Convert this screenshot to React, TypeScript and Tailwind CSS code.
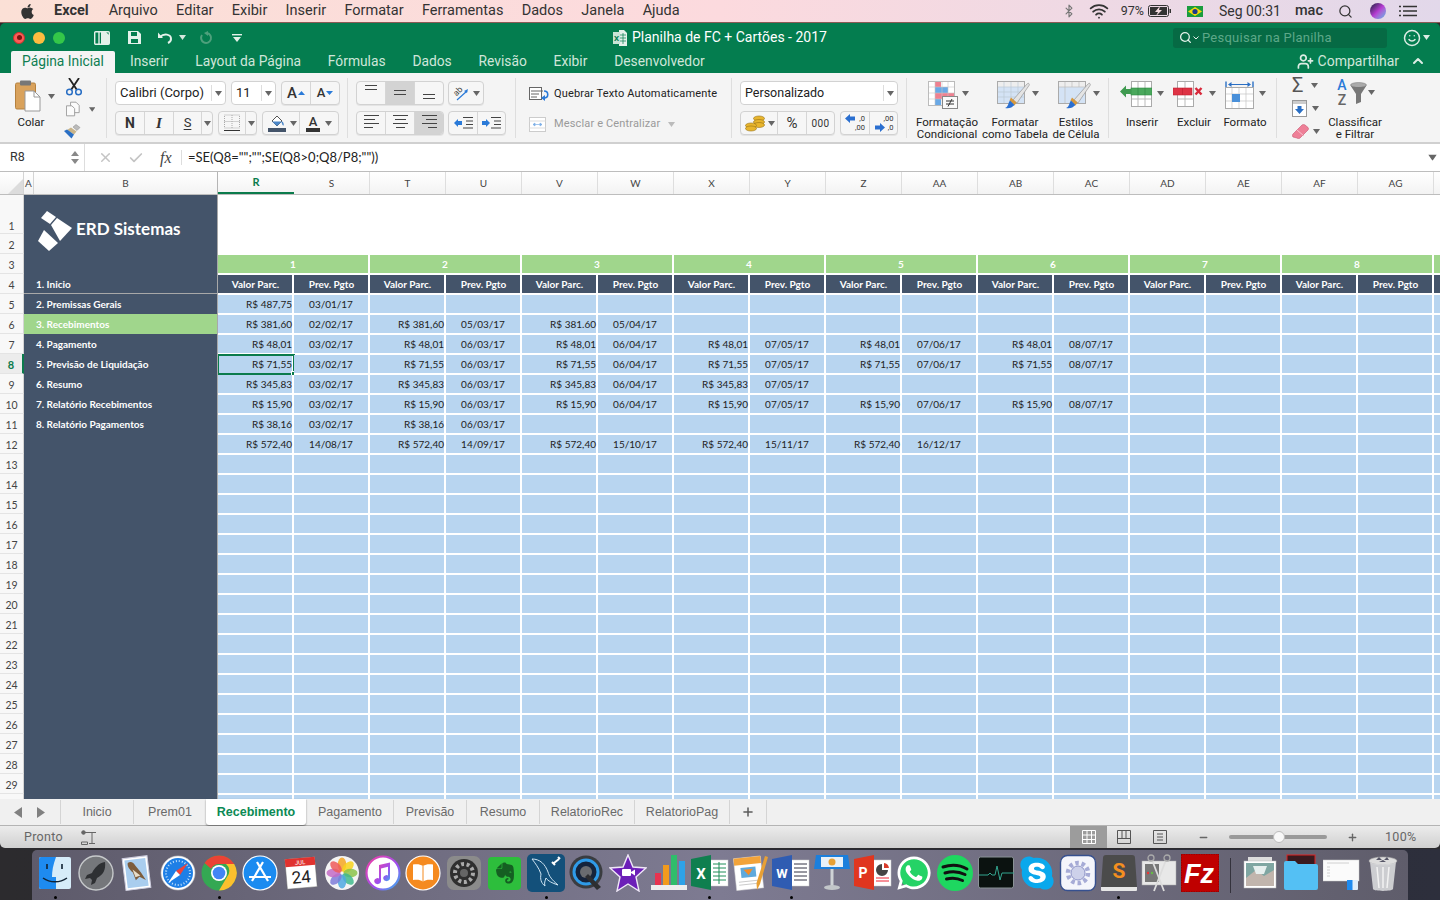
import { FaApple, FaEvernote, FaSkype, FaWhatsapp } from 'react-icons/fa'
import { Bluetooth, Check, ChevronUp, Minus, Plus, Search, Smile, UserPlus, Wifi, X } from 'lucide-react'
import type { ReactNode } from 'react'

const menus = ['Arquivo', 'Editar', 'Exibir', 'Inserir', 'Formatar', 'Ferramentas', 'Dados', 'Janela', 'Ajuda']
const ribbonTabs = ['Inserir', 'Layout da Página', 'Fórmulas', 'Dados', 'Revisão', 'Exibir', 'Desenvolvedor']
const columns = ['R', 'S', 'T', 'U', 'V', 'W', 'X', 'Y', 'Z', 'AA', 'AB', 'AC', 'AD', 'AE', 'AF', 'AG', '']
const navItems = ['2. Premissas Gerais', '3. Recebimentos', '4. Pagamento', '5. Previsão de Liquidação', '6. Resumo', '7. Relatório Recebimentos', '8. Relatório Pagamentos']

const rows: [string, string][][] = [
  [['487,75', '03/01/17']],
  [['381,60', '02/02/17'], ['381,60', '05/03/17'], ['381.60', '05/04/17']],
  [['48,01', '03/02/17'], ['48,01', '06/03/17'], ['48,01', '06/04/17'], ['48,01', '07/05/17'], ['48,01', '07/06/17'], ['48,01', '08/07/17']],
  [['71,55', '03/02/17'], ['71,55', '06/03/17'], ['71,55', '06/04/17'], ['71,55', '07/05/17'], ['71,55', '07/06/17'], ['71,55', '08/07/17']],
  [['345,83', '03/02/17'], ['345,83', '06/03/17'], ['345,83', '06/04/17'], ['345,83', '07/05/17']],
  [['15,90', '03/02/17'], ['15,90', '06/03/17'], ['15,90', '06/04/17'], ['15,90', '07/05/17'], ['15,90', '07/06/17'], ['15,90', '08/07/17']],
  [['38,16', '03/02/17'], ['38,16', '06/03/17']],
  [['572,40', '14/08/17'], ['572,40', '14/09/17'], ['572,40', '15/10/17'], ['572,40', '15/11/17'], ['572,40', '16/12/17']],
]

const sheetTabs = [
  { name: 'Inicio', w: 'w-[73px]' },
  { name: 'Prem01', w: 'w-[73px]' },
  { name: 'Recebimento', w: 'w-[100px]', active: true },
  { name: 'Pagamento', w: 'w-[87px]' },
  { name: 'Previsão', w: 'w-[73px]' },
  { name: 'Resumo', w: 'w-[73px]' },
  { name: 'RelatorioRec', w: 'w-[95px]' },
  { name: 'RelatorioPag', w: 'w-[95px]' },
]

function Caret({ color = '#666', className = '' }: { color?: string; className?: string }) {
  return (
    <svg width="7" height="5" viewBox="0 0 7 5" className={className}>
      <path d="M0 0h7L3.5 5z" fill={color} />
    </svg>
  )
}

function Lines({ rows, y = 0 }: { rows: [number, number][]; y?: number }) {
  return (
    <svg width="18" height="16" viewBox="0 0 18 16">
      {rows.map(([x, w], i) => (
        <rect key={i} x={x} y={y + i * 4} width={w} height="1" fill="#444" />
      ))}
    </svg>
  )
}

function Seg({ children, className = '', pressed }: { children: ReactNode; className?: string; pressed?: boolean }) {
  return (
    <div className={`flex h-full items-center justify-center border-r border-[#d6d6d6] last:border-r-0 ${pressed ? 'bg-[#d3d3d3]' : ''} ${className}`}>
      {children}
    </div>
  )
}

function BtnGroup({ children, className = '' }: { children: ReactNode; className?: string }) {
  return (
    <div className={`flex h-[24px] overflow-hidden rounded-[4px] border border-[#d2d2d2] bg-[#f6f6f6] shadow-[0_1px_0_#e4e4e4] ${className}`}>
      {children}
    </div>
  )
}

function BigLabel({ children }: { children: ReactNode }) {
  return <div className="mt-[5px] shrink-0 whitespace-nowrap text-center text-[11.5px] leading-[12px] text-[#222]">{children}</div>
}

function PasteIcon() {
  return (
    <svg width="26" height="32" viewBox="0 0 26 32">
      <rect x="0.5" y="3" width="20" height="26" rx="1.5" fill="#d9a25c" stroke="#b5813f" />
      <rect x="5" y="0.5" width="11" height="5" rx="1" fill="#777" />
      <path d="M10 11h9l6 6v14H10z" fill="#fff" stroke="#999" />
      <path d="M19 11v6h6" fill="none" stroke="#999" />
    </svg>
  )
}

function ScissorsIcon() {
  return (
    <svg width="16" height="18" viewBox="0 0 16 18">
      <path d="M3 0l8 12M13 0L5 12" stroke="#222" strokeWidth="1.8" />
      <circle cx="3.5" cy="14" r="2.8" fill="none" stroke="#2a6fc4" strokeWidth="1.5" />
      <circle cx="12.5" cy="14" r="2.8" fill="none" stroke="#2a6fc4" strokeWidth="1.5" />
    </svg>
  )
}

function CopyIcon() {
  return (
    <svg width="15" height="16" viewBox="0 0 15 16">
      <path d="M5 .5h6l3.5 3.5v8H5z" fill="#fbfbfb" stroke="#999" />
      <path d="M.5 4.5h6l3 3v8h-9z" fill="#fbfbfb" stroke="#999" />
    </svg>
  )
}

function BrushIcon() {
  return (
    <svg width="17" height="15" viewBox="0 0 17 15">
      <path d="M9 3l3-2.5 4 3-3 3z" fill="#bbb" stroke="#888" strokeWidth=".5" />
      <path d="M7 3.5l5.5 4-2.5 3L3 6z" fill="#c8b48a" />
      <path d="M0 7l3-1.5 7 5-2.5 4z" fill="#2a6fc4" />
    </svg>
  )
}

function BorderIcon() {
  return (
    <svg width="18" height="18" viewBox="0 0 18 18">
      <rect x="1.5" y="1" width="15" height="13" fill="none" stroke="#aaa" strokeDasharray="1 1" />
      <path d="M9 1v13M1.5 7.5h15" stroke="#aaa" strokeDasharray="1 1" />
      <rect x="1" y="16" width="16" height="1" fill="#333" />
    </svg>
  )
}

function FillIcon() {
  return (
    <svg width="18" height="18" viewBox="0 0 18 18">
      <path d="M4 7l5-5 5 5-5 5z" fill="#fff" stroke="#555" />
      <path d="M4 7.5h10l-5 4.5z" fill="#4a86c8" />
      <path d="M14 8c1 1.5 1.5 2.5.8 3.2" stroke="#4a86c8" strokeWidth="1.4" fill="none" />
      <rect x="0" y="14" width="18" height="4" fill="#44546a" />
    </svg>
  )
}

function CondIcon() {
  return (
    <svg width="30" height="28" viewBox="0 0 30 28">
      <rect x=".5" y=".5" width="26" height="24" fill="#fff" stroke="#bbb" />
      <rect x="7" y="1" width="6" height="5" fill="#ef8090" />
      <rect x="7" y="6" width="13" height="6" fill="#6aa9e6" />
      <rect x="7" y="12" width="19" height="6" fill="#ef8090" />
      <rect x="7" y="18" width="6" height="6" fill="#6aa9e6" />
      <path d="M7 1v23M14 1v23M20 1v23M1 6h25M1 12h25M1 18h25" stroke="#c8c8c8" strokeWidth=".6" />
      <rect x="14.5" y="15.5" width="15" height="12" fill="#fafafa" stroke="#888" />
      <path d="M18 20h8M18 23h8M24 18l-4 7.5" stroke="#333" fill="none" />
    </svg>
  )
}

function TableIcon({ fill = '#d4e3f5', plain }: { fill?: string; plain?: boolean }) {
  return (
    <svg width="33" height="28" viewBox="0 0 33 28">
      <rect x=".5" y=".5" width="27" height="22" fill={fill} stroke="#aaa" />
      <rect x="1" y="1" width="26" height="5" fill="#eee" />
      {!plain && <path d="M7 1v21M14 1v21M21 1v21M1 6h26M1 11h26M1 16h26" stroke="#bcc8d6" strokeWidth=".7" />}
      {plain && <path d="M7 1v5M14 1v5M21 1v5M1 6h26M7 6v16" stroke="#bbb" strokeWidth=".7" />}
      <path d="M16 19L30 3c1.5-1.5 3 0 2 1.5L20 22z" fill="#e4e4e4" stroke="#8a8a8a" strokeWidth=".6" />
      <path d="M14 16.5l5.5 5-2 3-5-5z" fill="#d6993f" />
      <path d="M8 27c3.5-1 3-5 5-7.5l4.5 4.5C15 26.5 12 28 8 27z" fill="#2a6fd0" />
    </svg>
  )
}

function InsertIcon() {
  return (
    <svg width="32" height="27" viewBox="0 0 32 27">
      <rect x="11.5" y=".5" width="20" height="25" fill="#fff" stroke="#aaa" />
      <path d="M18 1v24M25 1v24M12 18h19" stroke="#bbb" />
      <rect x="11" y="7" width="21" height="7" fill="#4aa85c" stroke="#2f8a44" strokeWidth=".6" />
      <path d="M18 7v7M25 7v7" stroke="#2f8a44" strokeWidth=".7" />
      <path d="M0 10.5L6 4.5v3.5h5v5H6v3.5z" fill="#3f9a50" />
    </svg>
  )
}

function DeleteIcon() {
  return (
    <svg width="31" height="27" viewBox="0 0 31 27">
      <rect x="4.5" y=".5" width="16" height="25" fill="#fff" stroke="#aaa" />
      <path d="M12 1v24M5 18h15" stroke="#bbb" />
      <rect x="0" y="7" width="19" height="7" fill="#de3345" stroke="#bf2232" strokeWidth=".6" />
      <path d="M9.5 7v7" stroke="#bf2232" strokeWidth=".7" />
      <path d="M22.5 7l6 6.5M28.5 7l-6 6.5" stroke="#d8293b" strokeWidth="2.4" />
    </svg>
  )
}

function FormatIcon() {
  return (
    <svg width="29" height="28" viewBox="0 0 29 28">
      <path d="M1 .5v6M28 .5v6" stroke="#2a6fc4" strokeWidth="1.4" />
      <path d="M4 3.5h21" stroke="#2a6fc4" strokeWidth="1.2" />
      <path d="M3 3.5l3.5-2.5v5zM26 3.5L22.5 1v5z" fill="#2a6fc4" />
      <rect x=".5" y="6.5" width="28" height="21" fill="#fff" stroke="#aaa" />
      <path d="M7 7v20M14 7v20M21 7v20M1 13h27M1 20h27" stroke="#c4c4c4" strokeWidth=".7" />
      <rect x="7" y="13" width="8" height="8" fill="#4a90d9" />
    </svg>
  )
}

function SmallArrow({ dir, label, label2 }: { dir: 'l' | 'r'; label: string; label2: string }) {
  return (
    <div className="relative h-[20px] w-[24px] text-[7.5px] leading-[8px] text-[#333]">
      <span className="absolute right-[2px] top-[2px]">{label}</span>
      <span className="absolute bottom-[1px] right-[2px]">{label2}</span>
      <svg width="10" height="9" viewBox="0 0 10 9" className={dir === 'l' ? 'absolute left-[2px] top-[1px]' : 'absolute bottom-[1px] left-[3px]'}>
        <path d={dir === 'l' ? 'M0 4.5L5 0v2.5h5v4H5V9z' : 'M10 4.5L5 0v2.5H0v4h5V9z'} fill="#2a6fd0" />
      </svg>
    </div>
  )
}

function Ribbon() {
  return (
    <div className="flex h-[71px] shrink-0 items-start border-b-2 border-[#d0d0d0] bg-[#f4f4f4] font-['Roboto',sans-serif]">
      {/* Área de transferência */}
      <div className="mt-[5px] flex h-[60px] w-[107px] border-r border-[#dedede] pl-[15px]">
        <div className="flex w-[32px] flex-col">
          <div className="mt-[2px] h-[34px]"><PasteIcon /></div>
          <div className="mt-[2px] w-[32px] text-center text-[11.5px] leading-[12px] text-[#222]">Colar</div>
        </div>
        <Caret className="ml-[1px] mt-[16px]" />
        <div className="ml-[8px] flex w-[32px] flex-col">
          <div className="ml-[3px]"><ScissorsIcon /></div>
          <div className="ml-[3px] mt-[5px] flex items-center gap-[9px]"><CopyIcon /><Caret /></div>
          <div className="ml-[1px] mt-[7px]"><BrushIcon /></div>
        </div>
      </div>

      {/* Fonte */}
      <div className="mt-[5px] flex h-[60px] w-[241px] flex-col gap-[6px] border-r border-[#dedede] pl-[8px] pt-[3px]">
        <div className="flex gap-[5px]">
          <div className="flex h-[24px] w-[111px] items-center rounded-[4px] border border-[#d2d2d2] bg-white pl-[4px] text-[13px] text-[#222]">
            <span className="flex-1">Calibri (Corpo)</span>
            <div className="flex h-[16px] w-[14px] items-center justify-center border-l border-[#ddd]"><Caret /></div>
          </div>
          <div className="flex h-[24px] w-[45px] items-center rounded-[4px] border border-[#d2d2d2] bg-white pl-[4px] text-[13px] text-[#222]">
            <span className="flex-1">11</span>
            <div className="flex h-[16px] w-[14px] items-center justify-center border-l border-[#ddd]"><Caret /></div>
          </div>
          <BtnGroup className="w-[59px]">
            <Seg className="w-[29px] gap-[1px] text-[15px] font-medium text-[#333]">
              A
              <svg width="7" height="4" viewBox="0 0 7 4"><path d="M0 4h7L3.5 0z" fill="#2a7ad8" /></svg>
            </Seg>
            <Seg className="flex-1 gap-[1px] text-[13px] font-medium text-[#333]">
              A
              <svg width="7" height="4" viewBox="0 0 7 4"><path d="M0 0h7L3.5 4z" fill="#2a7ad8" /></svg>
            </Seg>
          </BtnGroup>
        </div>
        <div className="flex gap-[5px]">
          <BtnGroup className="w-[98px]">
            <Seg className="w-[29px] text-[14px] font-bold text-[#333]">N</Seg>
            <Seg className="w-[29px] font-['Liberation_Serif',serif] text-[15px] font-bold italic text-[#333]">I</Seg>
            <Seg className="w-[28px] text-[13px] text-[#333] underline underline-offset-2">S</Seg>
            <Seg className="flex-1"><Caret /></Seg>
          </BtnGroup>
          <BtnGroup className="w-[39px]">
            <Seg className="w-[27px]"><BorderIcon /></Seg>
            <Seg className="flex-1"><Caret /></Seg>
          </BtnGroup>
          <BtnGroup className="w-[77px]">
            <Seg className="w-[37px] gap-[4px] pl-[2px]"><FillIcon /><Caret /></Seg>
            <Seg className="flex-1 gap-[5px]">
              <div className="flex flex-col items-center">
                <span className="text-[13px] font-medium leading-[13px] text-[#333]">A</span>
                <div className="h-[4px] w-[14px] bg-[#333]" />
              </div>
              <Caret />
            </Seg>
          </BtnGroup>
        </div>
      </div>

      {/* Alinhamento */}
      <div className="mt-[5px] flex h-[60px] w-[168px] flex-col gap-[6px] border-r border-[#dedede] pl-[8px] pt-[3px]">
        <div className="flex gap-[4px]">
          <BtnGroup className="w-[88px]">
            <Seg className="w-[29px] items-start pt-[3px]"><Lines rows={[[3, 12], [3, 12]]} y={0} /></Seg>
            <Seg className="w-[29px]" pressed><Lines rows={[[3, 12], [3, 12]]} y={5} /></Seg>
            <Seg className="flex-1"><Lines rows={[[3, 12], [3, 12]]} y={9} /></Seg>
          </BtnGroup>
          <BtnGroup className="w-[36px]">
            <Seg className="w-full gap-[4px]">
              <div className="relative h-[18px] w-[17px]">
                <span className="absolute left-[1px] top-[2px] -rotate-45 text-[8.5px] leading-[10px] text-[#444]">ab</span>
                <svg width="17" height="18" viewBox="0 0 17 18" className="absolute left-0 top-0">
                  <path d="M5 16L15 7" stroke="#2a7ad8" strokeWidth="1.2" />
                  <path d="M16 5l-1 4-3-2z" fill="#2a7ad8" />
                </svg>
              </div>
              <Caret />
            </Seg>
          </BtnGroup>
        </div>
        <div className="flex gap-[4px]">
          <BtnGroup className="w-[88px]">
            <Seg className="w-[29px]"><Lines rows={[[2, 15], [2, 11], [2, 15], [2, 9]]} /></Seg>
            <Seg className="w-[29px]"><Lines rows={[[2, 15], [4, 11], [2, 15], [5, 9]]} /></Seg>
            <Seg className="flex-1" pressed><Lines rows={[[2, 15], [6, 11], [2, 15], [8, 9]]} /></Seg>
          </BtnGroup>
          <BtnGroup className="w-[58px]">
            <Seg className="w-[29px] gap-[1px]">
              <svg width="8" height="8" viewBox="0 0 8 8"><path d="M0 4l4-4v2h4v4H4v2z" fill="#2a7ad8" /></svg>
              <svg width="10" height="14" viewBox="0 0 10 14"><path d="M0 1.5h10M3 5h7M3 8.5h7M0 12h10" stroke="#444" /></svg>
            </Seg>
            <Seg className="flex-1 gap-[1px]">
              <svg width="8" height="8" viewBox="0 0 8 8"><path d="M8 4L4 0v2H0v4h4v2z" fill="#2a7ad8" /></svg>
              <svg width="10" height="14" viewBox="0 0 10 14"><path d="M0 1.5h10M3 5h7M3 8.5h7M0 12h10" stroke="#444" /></svg>
            </Seg>
          </BtnGroup>
        </div>
      </div>

      {/* Quebrar texto / Mesclar */}
      <div className="mt-[5px] flex h-[60px] w-[216px] flex-col border-r border-[#dedede] pl-[13px] pt-[6px]">
        <div className="flex h-[20px] items-center gap-[3px] text-[11px] tracking-[0.15px] text-[#222]">
          <svg width="21" height="14" viewBox="0 0 21 14">
            <rect x=".5" y=".5" width="12" height="12" fill="#fff" stroke="#666" />
            <path d="M2 4h12M2 7h8M2 10h6" stroke="#666" />
            <path d="M15 4c5 0 5 7 0 7" stroke="#2a7ad8" strokeWidth="1.6" fill="none" />
            <path d="M12 11l4-3v6z" fill="#2a7ad8" />
          </svg>
          <span className="ml-[1px]">Quebrar Texto Automaticamente</span>
        </div>
        <div className="mt-[10px] flex h-[20px] items-center gap-[7px] text-[11px] tracking-[0.15px] text-[#9a9a9a]">
          <svg width="17" height="15" viewBox="0 0 17 15">
            <rect x=".5" y=".5" width="16" height="14" fill="#fff" stroke="#ccc" />
            <path d="M.5 4h16M.5 11h16" stroke="#ddd" />
            <path d="M4 7.5h9M4 7.5l2-1.5v3zM13 7.5l-2-1.5v3z" stroke="#7eb0e6" fill="#7eb0e6" strokeWidth=".7" />
          </svg>
          <span className="ml-[1px]">Mesclar e Centralizar</span>
          <Caret color="#bbb" className="ml-[1px]" />
        </div>
      </div>

      {/* Número */}
      <div className="mt-[5px] flex h-[60px] w-[175px] flex-col gap-[6px] border-r border-[#dedede] pl-[8px] pt-[3px]">
        <div className="flex h-[24px] w-[158px] items-center rounded-[4px] border border-[#d2d2d2] bg-white pl-[4px] text-[12.5px] text-[#222]">
          <span className="flex-1">Personalizado</span>
          <div className="flex h-[16px] w-[14px] items-center justify-center border-l border-[#ddd]"><Caret /></div>
        </div>
        <div className="flex gap-[5px]">
          <BtnGroup className="w-[95px]">
            <Seg className="w-[37px] gap-[3px] pl-[2px]">
              <svg width="20" height="17" viewBox="0 0 20 17">
                <ellipse cx="14" cy="3.5" rx="5.5" ry="2.5" fill="#e8b52e" stroke="#9a7414" strokeWidth=".6" />
                <ellipse cx="14" cy="7" rx="5.5" ry="2.5" fill="#e8b52e" stroke="#9a7414" strokeWidth=".6" />
                <ellipse cx="14" cy="10" rx="5.5" ry="2.5" fill="#e8b52e" stroke="#9a7414" strokeWidth=".6" />
                <ellipse cx="6" cy="10.5" rx="5.5" ry="2.5" fill="#e8b52e" stroke="#9a7414" strokeWidth=".6" />
                <ellipse cx="6" cy="13.5" rx="5.5" ry="2.5" fill="#e8b52e" stroke="#9a7414" strokeWidth=".6" />
              </svg>
              <Caret />
            </Seg>
            <Seg className="w-[29px] text-[15px] text-[#333]">%</Seg>
            <Seg className="flex-1 text-[10px] tracking-[0.4px] text-[#333]">000</Seg>
          </BtnGroup>
          <BtnGroup className="w-[58px]">
            <Seg className="w-[29px]"><SmallArrow dir="l" label=",0" label2=",00" /></Seg>
            <Seg className="flex-1"><SmallArrow dir="r" label=",00" label2=",0" /></Seg>
          </BtnGroup>
        </div>
      </div>

      {/* Estilos */}
      <div className="mt-[5px] flex h-[60px] w-[202px] border-r border-[#dedede] pl-[10px]">
        <div className="flex w-[60px] flex-col items-center">
          <div className="flex h-[33px] shrink-0 items-start gap-[4px] pt-[3px] pl-[2px]"><CondIcon /><Caret className="mt-[10px]" /></div>
          <BigLabel>Formatação<br />Condicional</BigLabel>
        </div>
        <div className="ml-[6px] flex w-[64px] flex-col items-center">
          <div className="flex h-[33px] shrink-0 items-start gap-[2px] pt-[3px] pl-[6px]"><TableIcon /><Caret className="mt-[10px]" /></div>
          <BigLabel>Formatar<br />como Tabela</BigLabel>
        </div>
        <div className="ml-[5px] flex w-[48px] flex-col items-center">
          <div className="flex h-[33px] shrink-0 items-start gap-[2px] pt-[3px] pl-[6px]"><TableIcon plain /><Caret className="mt-[10px]" /></div>
          <BigLabel>Estilos<br />de Célula</BigLabel>
        </div>
      </div>

      {/* Células */}
      <div className="mt-[5px] flex h-[60px] w-[168px] border-r border-[#dedede] pl-[11px]">
        <div className="flex w-[44px] flex-col items-center">
          <div className="flex h-[33px] shrink-0 items-start gap-[5px] pt-[3px]"><InsertIcon /><Caret className="mt-[10px]" /></div>
          <BigLabel>Inserir</BigLabel>
        </div>
        <div className="ml-[8px] flex w-[44px] flex-col items-center">
          <div className="flex h-[33px] shrink-0 items-start gap-[5px] pt-[3px]"><DeleteIcon /><Caret className="mt-[10px]" /></div>
          <BigLabel>Excluir</BigLabel>
        </div>
        <div className="ml-[6px] flex w-[46px] flex-col items-center">
          <div className="flex h-[33px] shrink-0 items-start gap-[5px] pt-[3px]"><FormatIcon /><Caret className="mt-[10px]" /></div>
          <BigLabel>Formato</BigLabel>
        </div>
      </div>

      {/* Edição */}
      <div className="mt-[2px] flex h-[66px] pl-[15px] pt-[1px]">
        <div className="flex w-[34px] flex-col gap-[5px]">
          <div className="flex h-[18px] items-center gap-[4px]">
            <span className="w-[15px] text-[20px] leading-[18px] text-[#555]">Σ</span>
            <Caret />
          </div>
          <div className="flex h-[18px] items-center gap-[5px]">
            <svg width="15" height="17" viewBox="0 0 15 17">
              <rect x=".5" y=".5" width="14" height="16" fill="#fff" stroke="#999" />
              <rect x="1" y="1" width="13" height="3" fill="#ccc" />
              <path d="M7.5 14L3 9h2.5V6h4v3H12z" fill="#2a6fc4" />
            </svg>
            <Caret />
          </div>
          <div className="flex h-[18px] items-center gap-[4px]">
            <svg width="17" height="15" viewBox="0 0 17 15">
              <path d="M1 10L10 1c1-.8 2-.8 3 0l3 2.5c.7.8.7 1.6 0 2.5l-8 8c-1 .8-2 .8-3 0L1 13c-.8-1-.8-2 0-3z" fill="#ee7f97" stroke="#c9536f" strokeWidth=".6" />
              <path d="M5 6l7 6" stroke="#f7c3cf" />
            </svg>
            <Caret />
          </div>
        </div>
        <div className="flex w-[58px] flex-col items-center">
          <div className="flex h-[35px] shrink-0 items-start gap-[1px] pt-[2px]">
            <div className="flex w-[14px] flex-col items-center text-[14px] font-medium leading-[15px]">
              <span className="text-[#2a7ad8]">A</span>
              <span className="text-[#666]">Z</span>
            </div>
            <svg width="17" height="24" viewBox="0 0 17 24" className="mt-[4px]">
              <ellipse cx="8.5" cy="3" rx="8" ry="2.5" fill="#aaa" stroke="#777" strokeWidth=".5" />
              <path d="M.5 3.5L6 12v10l5-2v-8l5.5-8.5c-3 2-13 2-16 0z" fill="#777" />
            </svg>
            <Caret className="mt-[12px]" />
          </div>
          <BigLabel>Classificar<br />e Filtrar</BigLabel>
        </div>
      </div>
    </div>
  )
}

function FormulaBar() {
  return (
    <div className="flex h-[27px] shrink-0 items-center bg-white font-['Roboto',sans-serif]">
      <div className="flex h-full w-[85px] items-center border-r border-[#ddd] pl-[10px] text-[12.5px] text-[#333]">
        <span className="flex-1">R8</span>
        <div className="mr-[5px] flex flex-col gap-[3px]">
          <svg width="8" height="5" viewBox="0 0 8 5" className="rotate-180"><path d="M0 0h8L4 5z" fill="#888" /></svg>
          <svg width="8" height="5" viewBox="0 0 8 5"><path d="M0 0h8L4 5z" fill="#888" /></svg>
        </div>
      </div>
      <X size={15} strokeWidth={2.4} className="ml-[13px] text-[#c4c4c4]" />
      <Check size={16} strokeWidth={2.6} className="ml-[15px] text-[#c4c4c4]" />
      <span className="ml-[16px] w-[15px] font-['Liberation_Serif',serif] text-[16px] italic text-[#444]">fx</span>
      <div className="ml-[6px] h-[15px] w-px bg-[#ddd]" />
      <span className="ml-[6px] flex-1 font-['Lato',sans-serif] text-[13px] text-[#222]">=SE(Q8="";"";SE(Q8&gt;0;Q8/P8;""))</span>
      <Caret color="#666" className="mr-[4px] scale-125" />
    </div>
  )
}

function ColumnHeader() {
  return (
    <div className="flex h-[24px] shrink-0 overflow-hidden border-y border-[#bdbdbd] bg-gradient-to-b from-white to-[#f3f3f3] font-['Lato',sans-serif] text-[10px] text-[#444]">
      <div className="flex w-[24px] shrink-0 items-end justify-end border-r border-[#d4d4d4]">
        <svg width="16" height="16" viewBox="0 0 16 16"><path d="M16 1v15H1z" fill="#dcdcdc" /></svg>
      </div>
      <div className="flex w-[10px] shrink-0 items-center justify-center border-r border-[#d4d4d4]">A</div>
      <div className="flex w-[184px] shrink-0 items-center justify-center border-r border-[#b5b5b5]">B</div>
      {columns.map((c) => (
        <div
          key={c}
          className={c === 'R'
            ? 'flex w-[76px] shrink-0 items-center justify-center border-b-2 border-[#0b7b4c] text-[11px] font-bold text-[#0b7b4c]'
            : 'flex w-[76px] shrink-0 items-center justify-center border-r border-[#dedede]'}
        >
          {c}
        </div>
      ))}
    </div>
  )
}

function RowHeaders() {
  const nums = Array.from({ length: 29 }, (_, i) => i + 1)
  return (
    <div className="w-[24px] shrink-0 font-['Lato',sans-serif] text-[10.5px] text-[#444]">
      {nums.map((n) => (
        <div
          key={n}
          className={`flex items-center justify-center border-b border-[#e4e4e4] ${n === 1 ? 'h-[39px] pt-[26px]' : 'h-[20px] pt-[4px]'} ${n === 8 ? 'border-r-2 border-r-[#0b7b4c] bg-[#ececec] text-[11px] font-bold text-[#0b7b4c]' : 'border-r border-r-[#d4d4d4] bg-[#f8f8f8]'}`}
        >
          {n}
        </div>
      ))}
      <div className="h-[5px] border-r border-r-[#d4d4d4] bg-[#f8f8f8]" />
    </div>
  )
}

function SideNav() {
  return (
    <div className="w-[194px] shrink-0 border-r border-[#a8a8a8] bg-[#44546a] font-['Lato',sans-serif] text-[10px] font-bold text-white">
      <div className="flex h-[79px] items-start pl-[14px] pt-[16px]">
        <svg width="36" height="41" viewBox="0 0 36 41">
          <path d="M3 7l6-7 9 6-6 7z" fill="#fff" />
          <path d="M19 7l15 10-12 13L13 14z" fill="#fff" />
          <path d="M6 19l14 13-9 8L0 30z" fill="#fff" />
        </svg>
        <span className="ml-[2px] mt-[7px] text-[17px] font-bold leading-[22px]">ERD Sistemas</span>
      </div>
      <div className="flex h-[20px] items-center border-b border-[#a8a8a8] pl-[12px] pt-[1px]">1. Inicio</div>
      {navItems.map((item) => (
        <div key={item} className={`flex h-[20px] items-center pl-[12px] ${item.startsWith('3.') ? 'bg-[#a0d68c]' : ''}`}>
          {item}
        </div>
      ))}
    </div>
  )
}

function DataGrid() {
  const groups = [1, 2, 3, 4, 5, 6, 7, 8, 9]
  const emptyRows = Array.from({ length: 18 }, (_, i) => i)
  return (
    <div className="flex-1 overflow-hidden font-['Lato',sans-serif] text-[10px] text-[#222]">
      <div className="h-[60px] bg-white" />
      <div className="flex h-[20px]">
        {groups.map((g) => (
          <div key={g} className="flex w-[152px] shrink-0 items-center justify-center border-b-2 border-r-2 border-white bg-[#a0d68c] font-bold text-white">
            {g < 9 ? g : ''}
          </div>
        ))}
      </div>
      <div className="flex h-[20px]">
        {columns.map((c, i) => (
          <div key={c} className="flex w-[76px] shrink-0 items-center justify-center border-b-2 border-r-2 border-white bg-[#44546a] pl-[1px] font-bold text-white">
            {c === '' ? '' : i % 2 === 0 ? 'Valor Parc.' : 'Prev. Pgto'}
          </div>
        ))}
      </div>
      {rows.map((row, r) => (
        <div key={r} className="flex h-[20px]">
          {columns.map((c, i) => {
            const entry = row[Math.floor(i / 2)]
            const isValue = i % 2 === 0
            return (
              <div
                key={c}
                className={`relative flex w-[76px] shrink-0 items-center border-b-2 border-r-2 border-white bg-[#b8d5f0] ${isValue ? 'justify-end' : 'justify-center'}`}
              >
                {entry ? (isValue ? `R$ ${entry[0]}` : entry[1]) : ''}
                {r === 3 && c === 'R' && (
                  <div className="absolute -left-px -top-px h-[21px] w-[78px] border-2 border-[#0b7b4c]">
                    <div className="absolute -bottom-[3px] -right-[3px] h-[5px] w-[5px] border border-white bg-[#0b7b4c]" />
                  </div>
                )}
              </div>
            )
          })}
        </div>
      ))}
      {emptyRows.map((r) => (
        <div key={r} className="flex h-[20px]">
          {columns.map((c) => (
            <div key={c} className="w-[76px] shrink-0 border-b-2 border-r-2 border-white bg-[#b8d5f0]" />
          ))}
        </div>
      ))}
    </div>
  )
}

function SheetTabs() {
  return (
    <div className="flex h-[27px] shrink-0 border-b border-[#b4b4b4] bg-[#f0f0f0] font-['Liberation_Sans',sans-serif] text-[12.5px] text-[#6a6a6a]">
      <div className="flex w-[60px] items-center gap-[15px] pl-[14px]">
        <svg width="8" height="11" viewBox="0 0 8 11"><path d="M8 0v11L0 5.5z" fill="#808080" /></svg>
        <svg width="8" height="11" viewBox="0 0 8 11"><path d="M0 0v11l8-5.5z" fill="#808080" /></svg>
      </div>
      {sheetTabs.map((t) =>
        t.active ? (
          <div key={t.name} className={`flex ${t.w} h-[26px] items-center justify-center rounded-b-[3px] bg-white font-bold text-[#0b8a55] shadow-[0_1px_2px_rgba(0,0,0,.45)]`}>
            {t.name}
          </div>
        ) : (
          <div key={t.name} className={`my-[1px] flex ${t.w} items-center justify-center border-l border-[#d4d4d4]`}>
            {t.name}
          </div>
        ),
      )}
      <div className="my-[1px] flex w-[38px] items-center justify-center border-x border-[#d4d4d4]">
        <Plus size={14} strokeWidth={2.6} className="text-[#5c5c5c]" />
      </div>
    </div>
  )
}

function StatusBar() {
  return (
    <div className="flex h-[22px] shrink-0 items-center rounded-b-[5px] bg-gradient-to-b from-[#ececec] to-[#d0d0d0] font-['Roboto',sans-serif] text-[12.5px] tracking-[0.3px] text-[#666]">
      <span className="ml-[24px] w-[56px]">Pronto</span>
      <svg width="16" height="15" viewBox="0 0 16 15" fill="none" stroke="#666" className="ml-[1px]">
        <circle cx="2.5" cy="2.5" r="1.8" fill="#666" />
        <path d="M4 2.5h11M11 2.5v11M8 13.5h6M.5 12h6v2.5h-6z" />
      </svg>
      <div className="ml-[973px] flex h-full w-[37px] items-center justify-center bg-[#9c9c9c]">
        <svg width="14" height="14" viewBox="0 0 14 14" fill="none" stroke="#fff"><path d="M.5.5h13v13H.5zM5 .5v13M9.5.5v13M.5 5h13M.5 9.500h13" /></svg>
      </div>
      <svg width="14" height="14" viewBox="0 0 14 14" fill="none" stroke="#555" className="ml-[10px]"><path d="M.5.5h13v13H.5zM.5 8.5h13M5 .5v8M9 .5v8" /></svg>
      <svg width="14" height="14" viewBox="0 0 14 14" fill="none" stroke="#555" className="ml-[22px]"><path d="M.5.5h13v13H.5zM4 4h6M4 7h6M4 10h6" /></svg>
      <Minus size={11} strokeWidth={3} className="ml-[31px] text-[#666]" />
      <div className="relative ml-[20px] h-[4px] w-[98px] rounded-full bg-[#999]">
        <div className="absolute left-[44px] top-[-4px] h-[12px] w-[12px] rounded-full border border-[#bbb] bg-[#f8f8f8]" />
      </div>
      <Plus size={11} strokeWidth={3} className="ml-[20px] text-[#666]" />
      <span className="ml-[27px]">100%</span>
    </div>
  )
}

function Icon({ children }: { children: ReactNode }) {
  return (
    <svg width="38" height="38" viewBox="0 0 38 38">
      {children}
    </svg>
  )
}

const dockIcons: { id: string; dot?: boolean; icon: ReactNode }[] = [
  {
    id: 'finder', dot: true, icon: (
      <Icon>
        <rect x="3" y="3" width="32" height="32" rx="2" fill="#d6ecf9" />
        <path d="M5 3h15c-3 8-4 14-4 20h4v12H5a2 2 0 0 1-2-2V5a2 2 0 0 1 2-2z" fill="#1e8bf0" />
        <path d="M11 10v5M26 10v5" stroke="#123" strokeWidth="1.6" />
        <path d="M7 24c7 5 17 5 24 0" stroke="#123" strokeWidth="1.4" fill="none" />
      </Icon>
    ),
  },
  {
    id: 'launchpad', icon: (
      <Icon>
        <circle cx="19" cy="19" r="17" fill="#75777b" stroke="#c6c9cb" strokeWidth="1.4" />
        <path d="M28 8c-6 1-10 5-13 11l-5 2-2 4 5-1 2 2-1 5 4-2 2-5c6-3 9-8 8-16z" fill="#2e3033" />
      </Icon>
    ),
  },
  {
    id: 'mail', icon: (
      <Icon>
        <g transform="rotate(-7 19 19)">
          <rect x="6" y="3" width="25" height="32" fill="#fff" stroke="#ccd" />
          <rect x="8" y="5" width="21" height="28" fill="#a9cdee" />
          <path d="M11 8c3-2 6 0 7 3l5 8 4 8-6-4-4 3-2-8c-3-3-5-7-4-10z" fill="#7d5c3c" />
          <path d="M15 15l7 7-5 1z" fill="#e7dcc8" />
        </g>
      </Icon>
    ),
  },
  {
    id: 'safari', icon: (
      <Icon>
        <circle cx="19" cy="19" r="17" fill="#fff" stroke="#ccc" strokeWidth=".6" />
        <circle cx="19" cy="19" r="15" fill="#1e7fe6" />
        <circle cx="19" cy="19" r="12" fill="none" stroke="#bfe0fb" strokeDasharray="1 2" strokeWidth="2" />
        <path d="M29 9L17 17l4 4z" fill="#f0433a" />
        <path d="M9 29l12-8-4-4z" fill="#fff" />
      </Icon>
    ),
  },
  {
    id: 'chrome', dot: true, icon: (
      <Icon>
        <circle cx="19" cy="19" r="17.5" fill="#34a853" />
        <path d="M19 1.5A17.5 17.5 0 0 1 34.2 10H19a9 9 0 0 0-8 4.7L4.5 9A17.5 17.5 0 0 1 19 1.5z" fill="#ea4335" />
        <path d="M34.2 10A17.5 17.5 0 0 1 19 36.5L27 23a9 9 0 0 0-1-13z" fill="#fbc02d" />
        <circle cx="19" cy="19" r="8" fill="#fff" />
        <circle cx="19" cy="19" r="6.3" fill="#4285f4" />
      </Icon>
    ),
  },
  {
    id: 'appstore', icon: (
      <Icon>
        <circle cx="19" cy="19" r="17" fill="#1b8bf0" stroke="#fff" strokeWidth="1.2" />
        <path d="M22 8L11 27M16 8l11 19M8 23h22" stroke="#fff" strokeWidth="2.2" fill="none" />
      </Icon>
    ),
  },
  {
    id: 'calendar', icon: (
      <Icon>
        <g transform="rotate(-5 19 19)">
          <rect x="4" y="4" width="30" height="30" fill="#fff" stroke="#666" strokeWidth=".5" />
          <rect x="4" y="4" width="30" height="8" fill="#e0322f" />
          <text x="19" y="10.5" textAnchor="middle" fontSize="6" fill="#fff" fontFamily="Roboto, sans-serif">JUL</text>
          <text x="19" y="29" textAnchor="middle" fontSize="17" fill="#222" fontFamily="Roboto, sans-serif">24</text>
        </g>
      </Icon>
    ),
  },
  {
    id: 'photos', icon: (
      <Icon>
        <circle cx="19" cy="19" r="17" fill="#f4f4f4" />
        {['#f5a623', '#f8d21c', '#8bc34a', '#3fb98c', '#4fa8e0', '#7e7bd8', '#c36bc6', '#ee5a5a'].map((c, i) => (
          <ellipse key={c} cx="19" cy="10.5" rx="4.2" ry="7" fill={c} opacity=".85" transform={`rotate(${i * 45} 19 19)`} />
        ))}
      </Icon>
    ),
  },
  {
    id: 'itunes', icon: (
      <Icon>
        <defs>
          <linearGradient id="itr" x1="0" y1="0" x2="1" y2="1">
            <stop offset="0" stopColor="#f23fa3" />
            <stop offset=".6" stopColor="#9b4ff0" />
            <stop offset="1" stopColor="#32b8ee" />
          </linearGradient>
        </defs>
        <circle cx="19" cy="19" r="16.5" fill="#fff" stroke="url(#itr)" strokeWidth="2.2" />
        <path d="M15 11l11-2.5V24a3.4 3 0 1 1-2-2.6v-8.6l-7 1.6V27a3.4 3 0 1 1-2-2.6z" fill="url(#itr)" />
      </Icon>
    ),
  },
  {
    id: 'books', icon: (
      <Icon>
        <circle cx="19" cy="19" r="17" fill="#f58a1f" stroke="#fff" strokeWidth="1.2" />
        <path d="M19 12c-3-2-6-2-10-1.5V26c4-.5 7-.5 10 1.5 3-2 6-2 10-1.5V10.500C25 10 22 10 19 12z" fill="#fff" />
        <path d="M19 12v15.500" stroke="#f58a1f" />
      </Icon>
    ),
  },
  {
    id: 'prefs', icon: (
      <Icon>
        <rect x="2" y="2" width="34" height="34" rx="7" fill="#8b8b8b" />
        <circle cx="19" cy="19" r="14" fill="#2f2f2f" />
        <circle cx="19" cy="19" r="9" fill="none" stroke="#aaa" strokeWidth="4" strokeDasharray="3 2.6" />
        <circle cx="19" cy="19" r="4" fill="#666" />
      </Icon>
    ),
  },
  {
    id: 'evernote', icon: (
      <Icon>
        <rect x="2" y="3" width="33" height="33" rx="4" fill="#2dbe3c" />
        <FaEvernote x="7" y="7" size={24} color="#155f22" />
      </Icon>
    ),
  },
  {
    id: 'mysql', dot: true, icon: (
      <Icon>
        <rect x="0" y="0" width="38" height="38" rx="5" fill="#13507a" />
        <path d="M5 5c8 0 13 5 16 13 1 4 4 8 10 13-6-2-10-4-12-7-1 3-2 5-1 8-4-3-5-7-4-12C12 14 8 9 5 5z" fill="none" stroke="#cfe4f2" strokeWidth="1" />
        <path d="M27 9l5-4M31 3l2 2M25 8l3 3" stroke="#fff" strokeWidth="2" />
      </Icon>
    ),
  },
  {
    id: 'quicktime', icon: (
      <Icon>
        <circle cx="18" cy="18" r="16.500" fill="#3a3c40" />
        <circle cx="18" cy="18" r="12" fill="#15243c" stroke="#2f9be8" strokeWidth="3" />
        <circle cx="18" cy="18" r="6" fill="#6a6c70" />
        <path d="M20 20l13 13-4 3-12-13z" fill="#2d2e31" />
      </Icon>
    ),
  },
  {
    id: 'imovie', icon: (
      <Icon>
        <path d="M19 1l5 12 13 1-10 9 3 14-11-7-11 7 3-14L1 14l13-1z" fill="#6c1fb8" stroke="#efe7f7" strokeWidth="1.4" />
        <rect x="13" y="15" width="9" height="7" rx="1" fill="#fff" />
        <path d="M22 18l4-2.500v6L22 19z" fill="#fff" />
      </Icon>
    ),
  },
  {
    id: 'numbers', icon: (
      <Icon>
        <path d="M1 31h36v5H1z" fill="#eee" />
        <rect x="5" y="19" width="6" height="12" fill="#e83350" />
        <rect x="13" y="11" width="6" height="20" fill="#f29a1d" />
        <rect x="21" y="1" width="6" height="30" fill="#2fbd6b" />
        <rect x="29" y="7" width="6" height="24" fill="#2ea2e8" />
      </Icon>
    ),
  },
  {
    id: 'excel', dot: true, icon: (
      <Icon>
        <rect x="18" y="6" width="19" height="26" fill="#fff" stroke="#ccc" strokeWidth=".5" />
        <path d="M22 10h13M22 14h13M22 18h13M22 22h13M22 26h13M28 8v22" stroke="#1f8f58" />
        <path d="M0 5l20-4v35L0 32z" fill="#0f7f4f" />
        <text x="10" y="25" textAnchor="middle" fontSize="15" fontWeight="700" fill="#fff" fontFamily="Roboto, sans-serif">X</text>
      </Icon>
    ),
  },
  {
    id: 'pages', icon: (
      <Icon>
        <g transform="rotate(-6 19 19)">
          <rect x="3" y="3" width="27" height="32" fill="#fff" stroke="#ddd" strokeWidth=".5" />
          <rect x="3" y="3" width="27" height="7" fill="#f2a33a" />
          <rect x="9" y="13" width="15" height="10" fill="#5fa9dc" />
          <path d="M12 15h9l-4.500 6z" fill="#f28c28" />
          <path d="M6 27h21M6 30h21" stroke="#ccc" />
        </g>
        <path d="M33 2l3 1-8 27-3 6-.5-7z" fill="#e8a035" />
      </Icon>
    ),
  },
  {
    id: 'word', dot: true, icon: (
      <Icon>
        <rect x="18" y="6" width="19" height="26" fill="#fff" stroke="#ccc" strokeWidth=".5" />
        <path d="M22 10h13M22 14h13M22 18h13M22 22h13M22 26h13" stroke="#334" />
        <path d="M0 5l20-4v35L0 32z" fill="#2f5cb2" />
        <text x="10" y="24" textAnchor="middle" fontSize="13" fontWeight="700" fill="#fff" fontFamily="Roboto, sans-serif">W</text>
      </Icon>
    ),
  },
  {
    id: 'keynote', icon: (
      <Icon>
        <path d="M3 1h32l2 14H1z" fill="#1c7fdc" />
        <rect x="8" y="3" width="22" height="10" fill="#e9f1f8" />
        <circle cx="19" cy="8" r="3.500" fill="#e8a035" />
        <rect x="17.500" y="15" width="3" height="17" fill="#cfd3d6" />
        <ellipse cx="19" cy="33.500" rx="8" ry="2.500" fill="#c2c6c9" />
      </Icon>
    ),
  },
  {
    id: 'powerpoint', icon: (
      <Icon>
        <rect x="18" y="6" width="19" height="26" fill="#fff" stroke="#ccc" strokeWidth=".5" />
        <path d="M28 10a6 6 0 1 0 6 6h-6z" fill="#444" />
        <path d="M30 9a6 6 0 0 1 5 5h-5z" fill="#d83b2b" />
        <path d="M22 24h13M22 27h13" stroke="#e23" />
        <path d="M0 5l20-4v35L0 32z" fill="#e0361f" />
        <text x="9" y="24" textAnchor="middle" fontSize="14" fontWeight="700" fill="#fff" fontFamily="Roboto, sans-serif">P</text>
      </Icon>
    ),
  },
  {
    id: 'whatsapp', icon: (
      <Icon>
        <circle cx="19" cy="19" r="15.500" fill="#25d366" />
        <FaWhatsapp x="0" y="0" size={38} color="#fff" />
      </Icon>
    ),
  },
  {
    id: 'spotify', icon: (
      <Icon>
        <circle cx="19" cy="19" r="18" fill="#1ed760" />
        <path d="M7 13c8-2.500 17-2 24 2M9 19c7-2 14-1.500 20 1.500M10.500 25c5.500-1.500 11-1 16 1.500" stroke="#111" strokeWidth="3" strokeLinecap="round" fill="none" />
      </Icon>
    ),
  },
  {
    id: 'activity', icon: (
      <Icon>
        <rect x="1.500" y="3" width="35" height="31" rx="2" fill="#0b1210" stroke="#8a9296" />
        <path d="M2 21h9l2-2 2 2h3l2-9 3 14 2-7h12" stroke="#33a58f" strokeWidth="1" fill="none" />
      </Icon>
    ),
  },
  {
    id: 'skype', icon: (
      <Icon>
        <circle cx="19" cy="19" r="12" fill="#fff" />
        <FaSkype x="0" y="0" size={38} color="#0aa8ec" />
      </Icon>
    ),
  },
  {
    id: 'gears', icon: (
      <Icon>
        <rect x="1.500" y="1.500" width="35" height="35" rx="7" fill="#f4f5fb" stroke="#36508f" strokeWidth="1.4" />
        <circle cx="19" cy="19" r="10" fill="none" stroke="#a6abd6" strokeWidth="4.500" strokeDasharray="3.500 2.800" />
        <circle cx="19" cy="19" r="7" fill="#cdd1ea" stroke="#9096c8" />
      </Icon>
    ),
  },
  {
    id: 'sublime', dot: true, icon: (
      <Icon>
        <path d="M3 4a3 3 0 0 1 3-3h26a3 3 0 0 1 3 3l2 29H1z" fill="#4b4b4b" />
        <path d="M1 33h36v3a1 1 0 0 1-1 1H2a1 1 0 0 1-1-1z" fill="#e6e6e6" />
        <text x="19" y="24" textAnchor="middle" fontSize="21" fontWeight="700" fill="#f58f1f" fontFamily="Roboto, sans-serif">S</text>
      </Icon>
    ),
  },
  {
    id: 'grab', icon: (
      <Icon>
        <rect x="2" y="7" width="34" height="24" fill="#e8e8e8" stroke="#aaa" strokeWidth=".5" />
        <rect x="5" y="10" width="14" height="18" fill="#777" />
        <circle cx="8" cy="19" r="1.200" fill="#e33" />
        <circle cx="12" cy="19" r="1.200" fill="#6b4" />
        <path d="M12 6l12 31M26 6L14 37" stroke="#ddd" strokeWidth="1.800" />
        <circle cx="11" cy="4" r="3" fill="none" stroke="#aaa" strokeWidth="1.300" />
        <circle cx="27" cy="4" r="3" fill="none" stroke="#aaa" strokeWidth="1.300" />
      </Icon>
    ),
  },
  {
    id: 'filezilla', icon: (
      <Icon>
        <rect x="0" y="0" width="38" height="38" fill="#bf0000" stroke="#7d0000" strokeDasharray="1.500 1" />
        <text x="18" y="29" textAnchor="middle" fontSize="27" fontWeight="700" fontStyle="italic" fill="#fff" fontFamily="Liberation Sans, sans-serif">Fz</text>
      </Icon>
    ),
  },
]

const dockRight: { id: string; icon: ReactNode }[] = [
  {
    id: 'stack', icon: (
      <Icon>
        <rect x="7" y="3" width="24" height="6" fill="#ddd" />
        <rect x="3" y="7" width="32" height="27" fill="#fff" stroke="#bbb" strokeWidth=".5" />
        <rect x="5" y="9" width="28" height="23" fill="#7fa6a2" />
        <path d="M5 24l10-8 8 6 10-6v16H5z" fill="#c1b5ad" />
        <path d="M12 12h14l-3 8h-8z" fill="#e6efee" />
      </Icon>
    ),
  },
  {
    id: 'folder', icon: (
      <Icon>
        <rect x="5" y="1" width="28" height="14" fill="#3a1a1f" stroke="#d22" />
        <path d="M2 9a2 2 0 0 1 2-2h9l3 3h18a2 2 0 0 1 2 2v22a2 2 0 0 1-2 2H4a2 2 0 0 1-2-2z" fill="#54c0f4" />
      </Icon>
    ),
  },
  {
    id: 'window', icon: (
      <Icon>
        <rect x="0" y="6" width="36" height="21" fill="#fbfbfb" stroke="#ccc" strokeWidth=".5" />
        <path d="M4 9h22M4 13h3M4 16h3M4 19h3M4 22h3" stroke="#d0d0d0" />
        <rect x="24" y="26" width="11" height="10" rx="1" fill="#dfeefa" />
        <rect x="24" y="26" width="5.500" height="10" fill="#1e8bf0" />
      </Icon>
    ),
  },
  {
    id: 'trash', icon: (
      <Icon>
        <ellipse cx="19" cy="7" rx="14" ry="4" fill="#ddd" stroke="#aaa" strokeWidth=".6" />
        <path d="M12 6l3-3 3 3zM20 6h5l-2-3zM15 8h7l-3-2z" fill="#556" />
        <path d="M6 8c2 3 24 3 26 0l-3 27c-1 2.500-19 2.500-20 0z" fill="#d8d9db" opacity=".9" />
        <path d="M13 13l2 21M19 13v21M25 13l-2 21" stroke="#f2f2f2" strokeWidth="1.500" />
      </Icon>
    ),
  },
]

function Dock() {
  return (
    <div className="flex h-[51px] shrink-0 bg-gradient-to-r from-[#2c2b2e] via-[#2a2a33] to-[#2d2f3c] pt-[1px]">
      <div className="ml-[32px] flex h-[50px] w-[1376px] rounded-t-[5px] bg-gradient-to-r from-[#5e5b6b] via-[#7e7b92] to-[#5f5d6b] pl-[3px] pt-[4px]">
        {dockIcons.map((d) => (
          <div key={d.id} className="relative flex h-[46px] w-[40.9px] shrink-0 justify-center">
            {d.icon}
            {d.dot && <div className="absolute bottom-[1px] h-[3px] w-[3px] rounded-full bg-black" />}
          </div>
        ))}
        <div className="mx-[9px] my-[4px] h-[35px] w-px bg-[#34323c]" />
        {dockRight.map((d) => (
          <div key={d.id} className="flex h-[46px] w-[40.9px] shrink-0 justify-center">{d.icon}</div>
        ))}
      </div>
    </div>
  )
}

export default function App() {
  return (
    <div className="flex h-[900px] w-[1440px] flex-col overflow-hidden bg-[#2c2b2e] font-['Roboto',sans-serif]">
      {/* Barra de menu do macOS */}
      <div className="flex h-[23px] shrink-0 items-center border-b border-[#8a5a55] bg-gradient-to-r from-[#fbe0d6] via-[#fcdade] to-[#e2d8ea] text-[14.5px] text-[#333]">
        <FaApple size={17} className="ml-[19px] text-[#333]" />
        <span className="ml-[18px] font-bold">Excel</span>
        <div className="ml-[20px] flex gap-[18.3px]">
          {menus.map((m) => <span key={m}>{m}</span>)}
        </div>
        <div className="ml-auto flex items-center">
          <Bluetooth size={14} className="text-[#777]" />
          <Wifi size={20} strokeWidth={2.2} className="ml-[13px] text-[#333]" />
          <span className="ml-[12px] text-[12.5px]">97%</span>
          <svg width="24" height="12" viewBox="0 0 24 12" className="ml-[4px]">
            <rect x=".5" y=".5" width="20" height="11" rx="2" fill="none" stroke="#333" />
            <rect x="21.500" y="4" width="1.500" height="4" fill="#333" />
            <rect x="2" y="2" width="17" height="8" fill="#333" />
            <path d="M12 1L7 7h3l-2 4 6-6h-3z" fill="#f4dbe0" />
          </svg>
          <svg width="16" height="11" viewBox="0 0 16 11" className="ml-[15px]">
            <rect width="16" height="11" fill="#1a9c3e" />
            <path d="M8 1l7 4.500L8 10 1 5.500z" fill="#f5d90a" />
            <circle cx="8" cy="5.500" r="2.600" fill="#1e3a8a" />
          </svg>
          <span className="ml-[16px] text-[14px]">Seg 00:31</span>
          <span className="ml-[14px] font-medium">mac</span>
          <Search size={15} className="ml-[15px] text-[#333]" />
          <div className="ml-[17px] h-[16px] w-[16px] rounded-full bg-gradient-to-br from-[#1c1b3f] via-[#b53bd1] to-[#2fb4e6]" />
          <svg width="18" height="12" viewBox="0 0 18 12" className="ml-[13px] mr-[23px]">
            <path d="M0 1.500h2M4 1.500h14M0 6h2M4 6h14M0 10.500h2M4 10.500h14" stroke="#333" strokeWidth="1.500" />
          </svg>
        </div>
      </div>

      {/* Janela do Excel */}
      <div className="flex h-[826px] shrink-0 flex-col overflow-hidden rounded-t-[5px] rounded-b-[5px]">
        <div className="flex h-[27px] shrink-0 items-center bg-[#047d4f] pt-[2px] text-white">
          <div className="ml-[13px] h-[12px] w-[12px] rounded-full border border-[#c8312a] bg-[#fc5b57]">
            <div className="m-[2.500px] h-[5px] w-[5px] rounded-full bg-[#7a1410]" />
          </div>
          <div className="ml-[8px] h-[12px] w-[12px] rounded-full bg-[#fdbc40]" />
          <div className="ml-[8px] h-[12px] w-[12px] rounded-full bg-[#34c749]" />
          <svg width="16" height="14" viewBox="0 0 16 14" className="ml-[29px]">
            <rect x=".7" y=".7" width="14.600" height="12.600" rx="1" fill="none" stroke="#e4f1ea" strokeWidth="1.400" />
            <path d="M5 1v12" stroke="#e4f1ea" strokeWidth="1.400" />
            <path d="M7 1h5l3 3v9H7z" fill="#e4f1ea" />
          </svg>
          <svg width="15" height="15" viewBox="0 0 15 15" className="ml-[17px]">
            <path d="M1 1h10l3 3v10H1z" fill="#e4f1ea" />
            <rect x="4" y="2" width="6" height="4" fill="#047d4f" />
            <rect x="4" y="9" width="7" height="4" fill="#047d4f" />
          </svg>
          <svg width="16" height="13" viewBox="0 0 16 13" className="ml-[15px]" fill="none">
            <path d="M1 7V1.500l5 5.500z" fill="#e4f1ea" />
            <path d="M3 6c4-4 11-3 11 2 0 2-1 3-3 4" stroke="#e4f1ea" strokeWidth="2" />
          </svg>
          <Caret color="#d6e8de" className="ml-[6px]" />
          <svg width="14" height="14" viewBox="0 0 14 14" fill="none" className="ml-[13px]">
            <path d="M3 4a5 5 0 1 0 5-2" stroke="#4ea07c" strokeWidth="2" />
            <path d="M9 0v5L5 2z" fill="#4ea07c" />
          </svg>
          <svg width="10" height="8" viewBox="0 0 10 8" className="ml-[19px]">
            <rect width="10" height="1.400" fill="#e4f1ea" />
            <path d="M1 3h8L5 8z" fill="#e4f1ea" />
          </svg>
          <svg width="14" height="16" viewBox="0 0 14 16" className="ml-[371px]">
            <path d="M6 0h5l3 3v13H6z" fill="#e4f1ea" />
            <path d="M7 5h6M7 8h6M7 11h6M10 3v11" stroke="#047d4f" strokeWidth=".7" />
            <rect y="2" width="7" height="12" fill="#c9e4d6" />
            <text x="3.500" y="11" textAnchor="middle" fontSize="8" fontWeight="700" fill="#047d4f">X</text>
          </svg>
          <span className="ml-[5px] w-[192px] whitespace-nowrap text-[14px]">Planilha de FC + Cartões - 2017</span>
          <div className="ml-[349px] flex h-[20px] w-[214px] items-center rounded-[3px] bg-[#066a44] pl-[6px] text-[13px] tracking-[0.25px] text-[#5da888]">
            <Search size={13} strokeWidth={2.4} className="text-[#e4f1ea]" />
            <svg width="6" height="4" viewBox="0 0 6 4" className="ml-[1px] mr-[3px]"><path d="M.5.5L3 3l2.500-2.500" stroke="#e4f1ea" fill="none" /></svg>
            Pesquisar na Planilha
          </div>
          <Smile size={18} className="ml-[16px] text-[#dcece4]" />
          <Caret color="#dcece4" className="ml-[2px]" />
        </div>
        <div className="flex h-[23px] shrink-0 items-end bg-[#047d4f] text-[13.8px] text-[#cfe6da]">
          <div className="ml-[11px] flex h-[22px] w-[104px] items-center justify-center rounded-t-[2px] bg-[#f4f4f4] pb-[1px] text-[#0f7e52]">Página Inicial</div>
          <div className="flex h-[22px] items-center pb-[1px]">
            {ribbonTabs.map((t, i) => (
              <span key={t} className={i === 0 ? 'ml-[15px]' : 'ml-[26.8px]'}>{t}</span>
            ))}
          </div>
          <div className="ml-auto flex h-[22px] items-center pb-[2px]">
            <UserPlus size={17} strokeWidth={2.4} className="text-[#dcece4]" />
            <span className="ml-[4px] text-[14px]">Compartilhar</span>
            <ChevronUp size={16} strokeWidth={3} className="ml-[11px] mr-[14px] text-[#dcece4]" />
          </div>
        </div>

        <Ribbon />
        <FormulaBar />
        <ColumnHeader />

        <div className="flex h-[604px] shrink-0 overflow-hidden bg-white">
          <RowHeaders />
          <SideNav />
          <DataGrid />
        </div>

        <SheetTabs />
        <StatusBar />
      </div>

      <Dock />
    </div>
  )
}
